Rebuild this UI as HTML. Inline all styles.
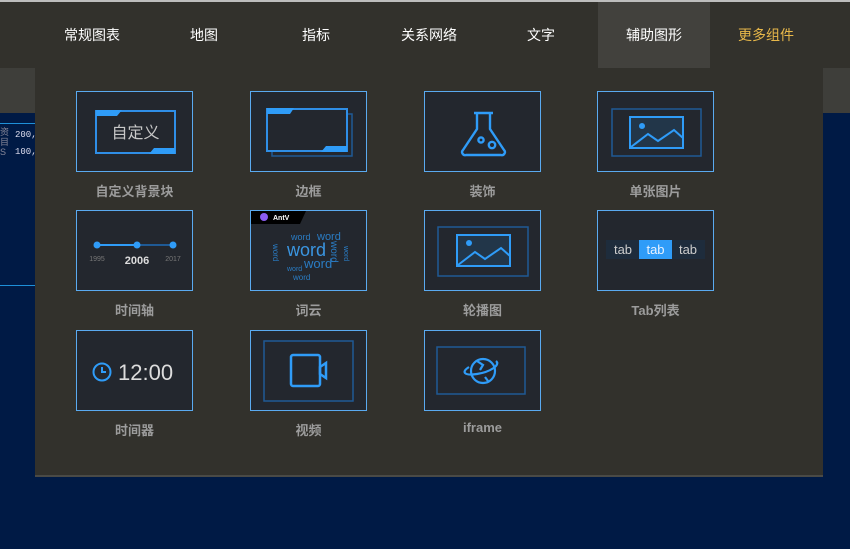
<!DOCTYPE html>
<html><head><meta charset="utf-8"><style>
*{margin:0;padding:0;box-sizing:border-box}
body{width:850px;height:549px;overflow:hidden;background:#001a45;position:relative;font-family:"Liberation Sans","Noto Sans CJK SC",sans-serif}
.top{position:absolute;left:0;top:0;width:850px;height:68px;background:#32312c;border-top:2px solid #bdbdbd}
.tab{position:absolute;top:0;height:66px;line-height:66px;color:#fff;font-size:14px;text-align:center;width:112px}
.band{position:absolute;top:68px;height:45px;background:#3e3e3a}
.panel{position:absolute;left:35px;top:68px;width:788px;height:409px;background:#32312c;border-bottom:2px solid #4a4a46}
.card{position:absolute;width:117px;height:81px;background:#23272e;border:1px solid #5aaaf0}
.card svg{position:absolute;left:0;top:0}
.lbl{position:absolute;width:117px;text-align:center;color:#9c9c9c;font-size:13px;font-weight:bold}
</style></head><body>
<div class="band" style="left:0;width:35px"></div>
<div class="band" style="left:823px;width:27px"></div>
<div style="position:absolute;left:0;top:123px;width:35px;height:1px;background:#1e90d8"></div>
<div style="position:absolute;left:0;top:285px;width:35px;height:1px;background:#1e90d8"></div>
<div style="position:absolute;left:15px;top:127px;color:#dde;font-size:9px;font-family:'Liberation Mono',monospace;line-height:17px">200,0<br>100,0</div>
<div style="position:absolute;left:0;top:127px;color:#889;font-size:9px;line-height:10px">资<br>目<br>S</div>
<div class="top">
<div class="tab" style="left:36px">常规图表</div>
<div class="tab" style="left:148px">地图</div>
<div class="tab" style="left:260px">指标</div>
<div class="tab" style="left:373px">关系网络</div>
<div class="tab" style="left:485px">文字</div>
<div class="tab" style="left:598px;background:#42413d">辅助图形</div>
<div class="tab" style="left:710px;color:#e8b84a">更多组件</div>
</div>
<div class="panel"></div>

<!-- row1 -->
<div class="card" style="left:76px;top:91px"><svg width="117" height="81">
<rect x="19" y="19" width="79" height="42" fill="none" stroke="#2f8ee6" stroke-width="2"/>
<path d="M19 18h26l-5 6h-21z M98 62h-26l5-6h21z" fill="#2f9cf8"/>
<text x="58.5" y="46" fill="#c8c8c8" font-size="16" text-anchor="middle" font-family="Noto Sans CJK SC,sans-serif">自定义</text></svg></div>
<div class="lbl" style="left:76px;top:181px">自定义背景块</div>

<div class="card" style="left:250px;top:91px"><svg width="117" height="81">
<rect x="21" y="22" width="80" height="42" fill="none" stroke="#1f5a95" stroke-width="1.5"/>
<rect x="16" y="17" width="80" height="42" fill="#23272e" stroke="#2f8ee6" stroke-width="2"/>
<path d="M16 16h27l-4 6h-23z M96 60h-26l5-6h21z" fill="#2f9cf8"/></svg></div>
<div class="lbl" style="left:250px;top:181px">边框</div>

<div class="card" style="left:424px;top:91px"><svg width="117" height="81" fill="none" stroke="#2f9cf8" stroke-width="2.4">
<path d="M49 21h19M52 21v16l-14 21a3 3 0 0 0 3 5h35a3 3 0 0 0 3-5l-14-21v-16"/>
<circle cx="56" cy="48" r="2.6"/><circle cx="67" cy="53" r="3.2"/></svg></div>
<div class="lbl" style="left:424px;top:181px">装饰</div>

<div class="card" style="left:597px;top:91px"><svg width="117" height="81">
<rect x="14" y="17" width="89" height="47" fill="none" stroke="#1f5a95" stroke-width="1.5"/>
<rect x="32" y="25" width="53" height="31" fill="#223649" stroke="#2f9cf8" stroke-width="2"/>
<circle cx="44" cy="34" r="3" fill="#2f9cf8"/>
<path d="M33 55l17-13 10 7 16-11 9 8" fill="none" stroke="#2f9cf8" stroke-width="2"/></svg></div>
<div class="lbl" style="left:597px;top:181px">单张图片</div>

<!-- row2 -->
<div class="card" style="left:76px;top:210px"><svg width="117" height="81">
<line x1="20" y1="34" x2="60" y2="34" stroke="#2f9cf8" stroke-width="2"/>
<line x1="60" y1="34" x2="96" y2="34" stroke="#1f5a95" stroke-width="2"/>
<circle cx="20" cy="34" r="3.5" fill="#2f9cf8"/><circle cx="60" cy="34" r="3.5" fill="#2f9cf8"/><circle cx="96" cy="34" r="3.5" fill="#2f9cf8"/>
<text x="20" y="50" fill="#777" font-size="7" text-anchor="middle">1995</text>
<text x="60" y="53" fill="#ddd" font-size="11" font-weight="bold" text-anchor="middle">2006</text>
<text x="96" y="50" fill="#777" font-size="7" text-anchor="middle">2017</text></svg></div>
<div class="lbl" style="left:76px;top:300px">时间轴</div>

<div class="card" style="left:250px;top:210px"><svg width="117" height="81" font-family="Liberation Sans,sans-serif" fill="#2a7cc4">
<path d="M0 0h55l-6 13h-49z" fill="#000"/>
<circle cx="13" cy="6" r="4" fill="#8a5cf0"/>
<text x="22" y="9" fill="#fff" font-size="7" font-weight="bold">AntV</text>
<text x="40" y="29" font-size="9">word</text><text x="66" y="29" font-size="11">word</text>
<text x="36" y="45" font-size="18" fill="#3a95e0">word</text>
<text x="36" y="60" font-size="7">word</text><text x="53" y="57" font-size="13">word</text>
<text x="42" y="69" font-size="8">word</text>
<text transform="translate(22,33) rotate(90)" font-size="8">word</text>
<text transform="translate(80,30) rotate(90)" font-size="10">word</text>
<text transform="translate(93,35) rotate(90)" font-size="7">word</text></svg></div>
<div class="lbl" style="left:250px;top:300px">词云</div>

<div class="card" style="left:424px;top:210px"><svg width="117" height="81">
<rect x="13" y="16" width="90" height="49" fill="none" stroke="#1f5a95" stroke-width="1.5"/>
<rect x="32" y="24" width="53" height="31" fill="#223649" stroke="#2f9cf8" stroke-width="2"/>
<circle cx="44" cy="32" r="3" fill="#2f9cf8"/>
<path d="M33 54l17-13 10 7 16-11 9 8" fill="none" stroke="#2f9cf8" stroke-width="2"/></svg></div>
<div class="lbl" style="left:424px;top:300px">轮播图</div>

<div class="card" style="left:597px;top:210px"><svg width="117" height="81" font-family="Liberation Sans,sans-serif">
<rect x="8" y="29" width="99" height="19" fill="#1e2c3c"/>
<rect x="41" y="29" width="33" height="19" fill="#2f9cf8"/>
<text x="25" y="43" fill="#ccc" font-size="13" text-anchor="middle">tab</text>
<text x="57.5" y="43" fill="#e8f2ff" font-size="13" text-anchor="middle">tab</text>
<text x="90" y="43" fill="#ccc" font-size="13" text-anchor="middle">tab</text></svg></div>
<div class="lbl" style="left:597px;top:300px">Tab列表</div>

<!-- row3 -->
<div class="card" style="left:76px;top:330px"><svg width="117" height="81">
<circle cx="25" cy="41" r="8.5" fill="none" stroke="#2f9cf8" stroke-width="2"/>
<path d="M25 36v5h4" fill="none" stroke="#2f9cf8" stroke-width="2"/>
<text x="41" y="49" fill="#ddd" font-size="22" font-family="Liberation Sans,sans-serif">12:00</text></svg></div>
<div class="lbl" style="left:76px;top:420px">时间器</div>

<div class="card" style="left:250px;top:330px"><svg width="117" height="81">
<rect x="13" y="10" width="89" height="60" fill="none" stroke="#1f5a95" stroke-width="1.5"/>
<rect x="40" y="24" width="29" height="31" rx="2" fill="none" stroke="#2f9cf8" stroke-width="2.5"/>
<path d="M69 36l6-4v15l-6-4z" fill="none" stroke="#2f9cf8" stroke-width="2.5"/></svg></div>
<div class="lbl" style="left:250px;top:420px">视频</div>

<div class="card" style="left:424px;top:330px"><svg width="117" height="81" fill="none" stroke="#2f9cf8" stroke-width="2.2">
<rect x="12" y="16" width="88" height="47" stroke="#1f5a95" stroke-width="1.5"/>
<circle cx="58" cy="40" r="12"/>
<path d="M44 36c-8 5-5 9 8 7s24-9 19-13"/>
<path d="M52 30l6 4-3 5M60 46l3 4"/></svg></div>
<div class="lbl" style="left:424px;top:420px">iframe</div>
</body></html>
